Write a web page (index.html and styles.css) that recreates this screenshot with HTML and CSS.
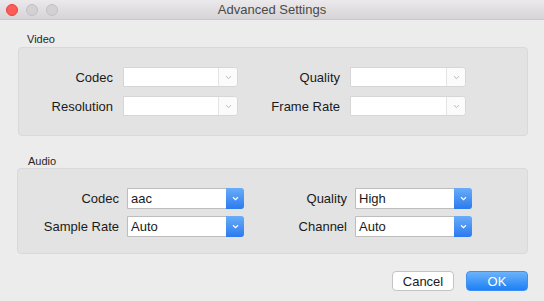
FILE: index.html
```html
<!DOCTYPE html>
<html lang="en">
<head>
    <meta charset="UTF-8">
    <title>Advanced Settings</title>
    <link rel="stylesheet" href="styles.css">
</head>
<body>
    <div class="window">
        <div class="titlebar">
            <div class="lights">
                <span class="light red"></span>
                <span class="light gray"></span>
                <span class="light gray"></span>
            </div>
            <div class="title">Advanced Settings</div>
        </div>

        <div class="group-label video-label">Video</div>
        <div class="group video">
            <label>Codec</label>
            <div class="select disabled"><span class="value"></span><span class="arrow"><svg width="7" height="5" viewBox="0 0 7 5"><path d="M1 1.2 L3.5 3.6 L6 1.2" fill="none" stroke="#b9b9b9" stroke-width="1"/></svg></span></div>
            <label>Quality</label>
            <div class="select disabled"><span class="value"></span><span class="arrow"><svg width="7" height="5" viewBox="0 0 7 5"><path d="M1 1.2 L3.5 3.6 L6 1.2" fill="none" stroke="#b9b9b9" stroke-width="1"/></svg></span></div>
            <label>Resolution</label>
            <div class="select disabled"><span class="value"></span><span class="arrow"><svg width="7" height="5" viewBox="0 0 7 5"><path d="M1 1.2 L3.5 3.6 L6 1.2" fill="none" stroke="#b9b9b9" stroke-width="1"/></svg></span></div>
            <label>Frame Rate</label>
            <div class="select disabled"><span class="value"></span><span class="arrow"><svg width="7" height="5" viewBox="0 0 7 5"><path d="M1 1.2 L3.5 3.6 L6 1.2" fill="none" stroke="#b9b9b9" stroke-width="1"/></svg></span></div>
        </div>

        <div class="group-label audio-label">Audio</div>
        <div class="group audio">
            <label>Codec</label>
            <div class="select"><span class="value">aac</span><span class="arrow"><svg width="7" height="5" viewBox="0 0 7 5"><path d="M1 1.2 L3.5 3.6 L6 1.2" fill="none" stroke="#fff" stroke-width="1.2"/></svg></span></div>
            <label>Quality</label>
            <div class="select"><span class="value">High</span><span class="arrow"><svg width="7" height="5" viewBox="0 0 7 5"><path d="M1 1.2 L3.5 3.6 L6 1.2" fill="none" stroke="#fff" stroke-width="1.2"/></svg></span></div>
            <label>Sample Rate</label>
            <div class="select"><span class="value">Auto</span><span class="arrow"><svg width="7" height="5" viewBox="0 0 7 5"><path d="M1 1.2 L3.5 3.6 L6 1.2" fill="none" stroke="#fff" stroke-width="1.2"/></svg></span></div>
            <label>Channel</label>
            <div class="select"><span class="value">Auto</span><span class="arrow"><svg width="7" height="5" viewBox="0 0 7 5"><path d="M1 1.2 L3.5 3.6 L6 1.2" fill="none" stroke="#fff" stroke-width="1.2"/></svg></span></div>
        </div>

        <div class="buttons">
            <button class="cancel">Cancel</button>
            <button class="ok">OK</button>
        </div>
    </div>
</body>
</html>
```

FILE: styles.css
```css
body {
    margin: 0;
    font-family: 'Liberation Sans', Arial, sans-serif;
    font-size: 13px;
    color: #1a1a1a;
    background: #ececec;
}
.window {
    width: 544px;
    height: 301px;
    background: #ececec;
    overflow: hidden;
}
.titlebar {
    height: 19px;
    border-bottom: 1px solid #c9c9c9;
    background: linear-gradient(#ebe9eb, #d6d4d6);
    display: flex;
    align-items: center;
    position: relative;
}
.lights {
    display: flex;
    gap: 8px;
    padding-left: 6px;
}
.light {
    width: 12px;
    height: 12px;
    border-radius: 50%;
    box-sizing: border-box;
}
.light.red {
    background: #fc5b57;
    border: 1px solid #e3453f;
}
.light.gray {
    background: #d3d1d3;
    border: 1px solid #c2c0c2;
}
.title {
    position: absolute;
    left: 0;
    right: 0;
    text-align: center;
    color: #4a4a4a;
    font-size: 13px;
    line-height: 19px;
}
.group-label {
    font-size: 11px;
    line-height: 14px;
    color: #262626;
}
.video-label {
    margin: 12px 0 1px 27px;
}
.audio-label {
    margin: 18px 0 0 28px;
}
.group {
    background: #e3e3e3;
    border: 1px solid #d9d9d9;
    border-radius: 4px;
    display: grid;
    align-items: center;
}
.group label {
    text-align: right;
}
.video {
    margin-left: 18px;
    width: 508px;
    grid-template-columns: 94px 115px 92px 116px;
    column-gap: 10px;
    row-gap: 9px;
    padding: 19px 0 19px 0;
    grid-auto-rows: 20px;
}
.audio {
    margin-left: 17px;
    width: 509px;
    grid-template-columns: 101px 117px 95px 117px;
    column-gap: 8px;
    row-gap: 7px;
    padding: 19px 0 16px 0;
    grid-auto-rows: 21px;
}
.select {
    display: flex;
    height: 100%;
    box-sizing: border-box;
    background: #fff;
    border: 1px solid #bdbdbd;
    border-radius: 0 4px 4px 0;
}
.select .value {
    flex: 1;
    padding-left: 3px;
    line-height: 19px;
}
.select .arrow {
    width: 18px;
    display: flex;
    align-items: center;
    justify-content: center;
    background: linear-gradient(#69acf8, #2b7bef);
    border-radius: 0 3px 3px 0;
    margin: -1px -1px -1px 0;
}
.select.disabled {
    border-color: #d6d6d6;
}
.select.disabled .arrow {
    background: #fbfbfb;
    border-left: 1px solid #e4e4e4;
    margin: 0;
}
.buttons {
    display: flex;
    justify-content: flex-end;
    gap: 12px;
    margin: 17px 16px 0 0;
}
button {
    width: 62px;
    height: 20px;
    font-family: 'Liberation Sans', Arial, sans-serif;
    font-size: 13px;
    border-radius: 4px;
    padding: 0;
}
.cancel {
    background: #fff;
    border: 1px solid #c4c4c4;
    color: #1a1a1a;
}
.ok {
    background: linear-gradient(#6cb3fa, #1c80f6);
    border: 1px solid #3d8ff2;
    color: #fff;
}
```
